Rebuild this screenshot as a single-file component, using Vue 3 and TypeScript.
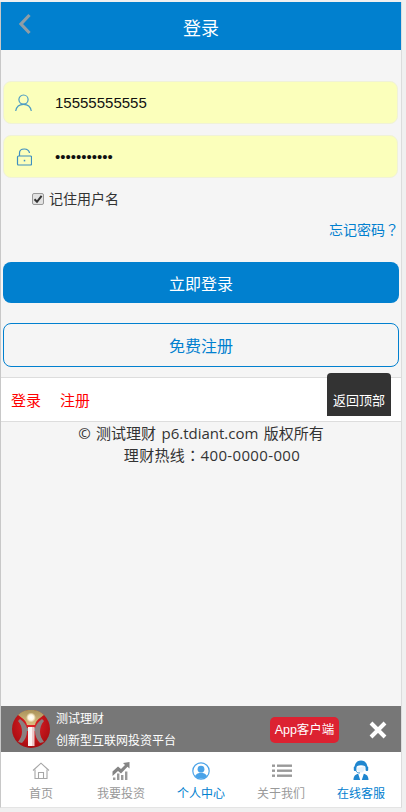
<script setup lang="ts">
const tabs = [
  { label: '首页', icon: 'home', active: false },
  { label: '我要投资', icon: 'chart', active: false },
  { label: '个人中心', icon: 'user', active: true },
  { label: '关于我们', icon: 'list', active: false },
  { label: '在线客服', icon: 'agent', active: true },
]
</script>

<template>
  <div class="frame">
    <header class="topbar">
      <svg class="back" width="14" height="22" viewBox="0 0 14 22">
        <path d="M11.5 2 L3 11 L11.5 20" fill="none" stroke="#8f9da6" stroke-width="3.2" />
      </svg>
      <h1>登录</h1>
    </header>

    <main class="form">
      <label class="field">
        <svg width="17" height="18" viewBox="0 0 17 18" fill="none" stroke="#4b9cc4" stroke-width="1.2">
          <circle cx="8.5" cy="5.6" r="4.6" />
          <path d="M0.7 17 C1.5 12.4 4.5 10.4 8.5 10.4 C12.5 10.4 15.5 12.4 16.3 17" />
        </svg>
        <input value="15555555555" readonly />
      </label>
      <label class="field">
        <svg width="17" height="18" viewBox="0 0 17 18" fill="none" stroke="#3f8fc0" stroke-width="1.2">
          <rect x="2.5" y="8" width="14" height="9" rx="1" />
          <path d="M4.5 8 V5 C4.5 2.3 6.5 1 9.3 1 C12.1 1 14.1 2.6 14.5 5" />
          <path d="M9.5 11.8 V13.4" stroke-width="1.5" />
        </svg>
        <input type="password" value="12345678901" readonly />
      </label>

      <label class="remember">
        <span class="check">
          <svg width="10" height="10" viewBox="0 0 10 10">
            <path d="M1.5 5.2 L4 7.8 L8.6 1.8" fill="none" stroke="#333" stroke-width="2" />
          </svg>
        </span>
        记住用户名
      </label>

      <a class="forgot">忘记密码<span class="tc">？</span></a>

      <button class="btn primary" type="button">立即登录</button>
      <button class="btn outline" type="button">免费注册</button>
    </main>

    <nav class="links">
      <a>登录</a>
      <a>注册</a>
      <a class="to-top">返回顶部</a>
    </nav>

    <footer class="copy">
      <p>© 测试理财 p6.tdiant.com 版权所有</p>
      <p class="hotline">理财热线<span class="tc">：</span>400-0000-000</p>
    </footer>

    <div class="spacer"></div>

    <aside class="appbar">
      <svg class="logo" width="38" height="38" viewBox="0 0 38 38">
        <defs>
          <radialGradient id="ball" cx="50%" cy="40%" r="60%">
            <stop offset="0%" stop-color="#e2242a" />
            <stop offset="100%" stop-color="#a80c10" />
          </radialGradient>
          <linearGradient id="gold" x1="0" y1="0" x2="0" y2="1">
            <stop offset="0%" stop-color="#a8935a" />
            <stop offset="100%" stop-color="#dcbc80" />
          </linearGradient>
          <radialGradient id="glow">
            <stop offset="0%" stop-color="#ffffff" />
            <stop offset="55%" stop-color="#fff6dc" />
            <stop offset="100%" stop-color="#fff6dc" stop-opacity="0" />
          </radialGradient>
        </defs>
        <circle cx="19" cy="19" r="19" fill="url(#ball)" />
        <path d="M6 5 A19 19 0 0 1 32 5 C28 8 24 10 23 15 L15 15 C14 10 10 8 6 5Z" fill="url(#gold)" />
        <circle cx="19" cy="7.5" r="5" fill="url(#glow)" />
        <path d="M8 9 C12 12 14 15 15 18 L23 18 C24 15 26 12 30 9 L32 11 C29 14 28 18 28 22 C28 26 30 29 32 32 L28 33 C25 30 23 26 23 21 L15 21 C15 26 13 30 10 33 L6 32 C8 29 10 26 10 22 C10 18 9 14 6 11Z" fill="#8b8080" />
        <rect x="16" y="17" width="6" height="19" fill="#fbf4f4" />
        <rect x="20" y="17" width="2.5" height="19" fill="#eec8c8" />
      </svg>
      <div class="slogan">
        <span>测试理财</span>
        <span>创新型互联网投资平台</span>
      </div>
      <a class="app-btn">App客户端</a>
      <svg class="close" width="18" height="18" viewBox="0 0 18 18">
        <path d="M2 2 L16 16 M16 2 L2 16" stroke="#fff" stroke-width="4" />
      </svg>
    </aside>

    <nav class="tabs">
      <a v-for="t in tabs" :key="t.label" class="tab" :class="{ active: t.active }">
        <svg v-if="t.icon === 'home'" width="18" height="18" viewBox="0 0 18 18" fill="none" stroke="#a6a6a6" stroke-width="1.1">
          <path d="M1 8.5 L9 1.2 L17 8.5" />
          <path d="M3 7.5 V16.5 H15 V7.5" />
          <path d="M6.5 16.5 V10.5 H11.5 V16.5" />
        </svg>
        <svg v-else-if="t.icon === 'chart'" width="18" height="18" viewBox="0 0 18 18">
          <path d="M0.5 9.5 L6 4.5 L9 7 L13 3 L11 1 L17.5 0 L17.5 6.5 L15.5 4.8 L9 11.5 L6 9 L0.5 14Z" fill="#858585" />
          <path d="M1 18 V15.5 H3.4 V18Z M5 18 V11.5 H7.4 V18Z M9 18 V13 H11.4 V18Z M13 18 V9.5 H15.4 V18Z" fill="#9a9a9a" />
        </svg>
        <svg v-else-if="t.icon === 'user'" width="18" height="18" viewBox="0 0 18 18">
          <circle cx="9" cy="9" r="8.2" fill="#fff" stroke="#4aa3e8" stroke-width="1.2" />
          <circle cx="9" cy="7.2" r="3.4" fill="#4aa3e8" />
          <path d="M3 14 C4.5 11.5 6.5 10.8 9 10.8 C11.5 10.8 13.5 11.5 15 14 C13.5 15.8 11.5 16.6 9 16.6 C6.5 16.6 4.5 15.8 3 14Z" fill="#4aa3e8" />
        </svg>
        <svg v-else-if="t.icon === 'list'" class="list" width="20" height="18" viewBox="0 0 20 18" fill="#999">
          <rect x="0" y="2.5" width="3" height="2.4" />
          <rect x="5" y="2.5" width="15" height="2.4" />
          <rect x="0" y="7.5" width="3" height="2.4" />
          <rect x="5" y="7.5" width="15" height="2.4" />
          <rect x="0" y="12.5" width="3" height="2.4" />
          <rect x="5" y="12.5" width="15" height="2.4" />
        </svg>
        <svg v-else class="agent" width="16" height="20" viewBox="0 0 16 20">
          <path d="M1.5 8 C1.5 3 4.5 0.5 8 0.5 C11.5 0.5 14.5 3 14.5 8 L13 8 C13 6.4 11 5.2 8 5.2 C5 5.2 3 6.4 3 8Z" fill="#1f86cf" />
          <rect x="0.8" y="6.5" width="2.6" height="4.4" rx="1" fill="#1f86cf" />
          <rect x="12.6" y="6.5" width="2.6" height="4.4" rx="1" fill="#1f86cf" />
          <path d="M4 7.5 C6.5 7.5 9 7 11.6 6 C12.2 9.4 11 12.4 8 12.6 C5.4 12.6 4 10.4 4 7.5Z" fill="#e4f1fb" />
          <path d="M3 10.5 C3.4 12.4 5 13 7 13" fill="none" stroke="#1f86cf" stroke-width="0.9" />
          <path d="M0.5 20 C0.5 16 2.5 14.5 5.2 13.8 L7.2 20Z M15.5 20 C15.5 16 13.5 14.5 10.8 13.8 L8.8 20Z" fill="#1f86cf" />
        </svg>
        <span>{{ t.label }}</span>
      </a>
    </nav>
  </div>
</template>

<style>
html,
body {
  margin: 0;
  background: #f0f0f0;
}
</style>

<style scoped>
.frame {
  box-sizing: border-box;
  position: relative;
  width: 402px;
  height: 806px;
  margin-top: 2px;
  display: flex;
  flex-direction: column;
  background: #f5f5f5;
  border-left: 1px solid #c8c8c8;
  border-right: 1px solid #dcdcdc;
  border-bottom: 1px solid #e4e4e4;
  font-family: "Liberation Sans", "Noto Sans CJK SC", sans-serif;
  color: #333;
}

.tc {
  display: inline-block;
  height: 14px;
  line-height: 14px;
  font-family: "Noto Sans CJK TC", sans-serif;
}

.topbar {
  position: relative;
  box-sizing: border-box;
  height: 48px;
  padding-top: 1px;
  flex: none;
  display: flex;
  align-items: center;
  justify-content: center;
  background: #0180cf;
}
.topbar h1 {
  margin: 0;
  font-size: 18px;
  font-weight: 400;
  color: #fff;
}
.back {
  position: absolute;
  left: 17px;
  top: 11px;
}

.form {
  display: flex;
  flex-direction: column;
  padding: 31px 3px 0 2px;
}
.field {
  box-sizing: border-box;
  height: 43px;
  display: flex;
  align-items: center;
  padding-left: 11px;
  margin: 0 0 11px 0;
  width: 395px;
  background: #fbffbb;
  border: 1px solid #f0f2d8;
  border-radius: 8px;
}
.field svg {
  flex: none;
}
.field input {
  flex: 1;
  min-width: 0;
  margin-left: 23px;
  padding: 0;
  border: 0;
  outline: 0;
  background: transparent;
  font: 15px "Liberation Sans", sans-serif;
  color: #111;
}

.remember {
  display: flex;
  align-items: center;
  gap: 5px;
  height: 20px;
  margin: 0 0 0 29px;
  font-size: 14px;
  line-height: 20px;
}
.check {
  box-sizing: border-box;
  width: 12px;
  height: 12px;
  display: flex;
  align-items: center;
  justify-content: center;
  background: #e2e2e2;
  border: 1px solid #999;
  border-radius: 2px;
}

.forgot {
  display: block;
  height: 20px;
  align-self: flex-end;
  margin: 11px -1px 0 0;
  font-size: 14px;
  line-height: 20px;
  color: #0180cf;
}

.btn {
  box-sizing: border-box;
  display: block;
  width: 396px;
  padding: 0;
  border-radius: 8px;
  font: 16px "Liberation Sans", "Noto Sans CJK SC", sans-serif;
}
.primary {
  height: 41px;
  margin-top: 22px;
  background: #0180cf;
  border: 0;
  color: #fff;
}
.outline {
  height: 44px;
  margin-top: 20px;
  background: #f5f5f5;
  border: 1px solid #0180cf;
  color: #0180cf;
}

.links {
  position: relative;
  box-sizing: border-box;
  height: 45px;
  flex: none;
  margin-top: 10px;
  display: flex;
  align-items: center;
  gap: 19px;
  padding: 0 0 0 10px;
  background: #fff;
  border-top: 1px solid #ddd;
  border-bottom: 1px solid #ddd;
  font-size: 15px;
  color: #f00;
}
.to-top {
  position: absolute;
  left: 326px;
  top: -5px;
  box-sizing: border-box;
  width: 64px;
  height: 43px;
  padding-top: 20px;
  background: #333;
  border-radius: 4px 4px 0 0;
  font-size: 13px;
  line-height: 16px;
  text-align: center;
  color: #fff;
}

.copy {
  font-family: "Open Sans", "Noto Sans CJK SC", sans-serif;
  font-size: 15px;
  line-height: 23px;
  word-spacing: 1.5px;
  text-align: center;
  color: #333;
}
.copy p {
  margin: 0;
  height: 23px;
}
.copy .hotline {
  margin-top: -1px;
  padding-left: 22px;
  letter-spacing: 0.35px;
}

.spacer {
  flex: 1;
}

.appbar {
  position: relative;
  height: 46px;
  flex: none;
  display: flex;
  align-items: center;
  padding-left: 11px;
  background: #777;
  color: #fff;
}
.logo {
  flex: none;
}
.slogan {
  display: flex;
  flex-direction: column;
  gap: 6px;
  margin: 2px 0 0 6px;
  font-size: 12px;
  line-height: 16px;
}
.app-btn {
  margin-left: auto;
  margin-right: 30px;
  box-sizing: border-box;
  width: 69px;
  height: 26px;
  margin-top: 1px;
  background: #dc2231;
  border-radius: 5px;
  font-size: 12.5px;
  line-height: 26px;
  text-align: center;
}
.close {
  flex: none;
  margin-right: 14px;
  margin-top: 2px;
}

.tabs {
  height: 55px;
  flex: none;
  display: grid;
  grid-template-columns: repeat(5, 1fr);
  background: #fff;
}
.tab {
  display: flex;
  flex-direction: column;
  align-items: center;
  padding-top: 10px;
  gap: 5px;
  font-size: 12px;
  line-height: 18px;
  color: #999;
}
.tab.active {
  color: #0180cf;
}
.agent {
  margin: -2px 0 0;
}
.list {
  margin-left: 2px;
}
</style>
